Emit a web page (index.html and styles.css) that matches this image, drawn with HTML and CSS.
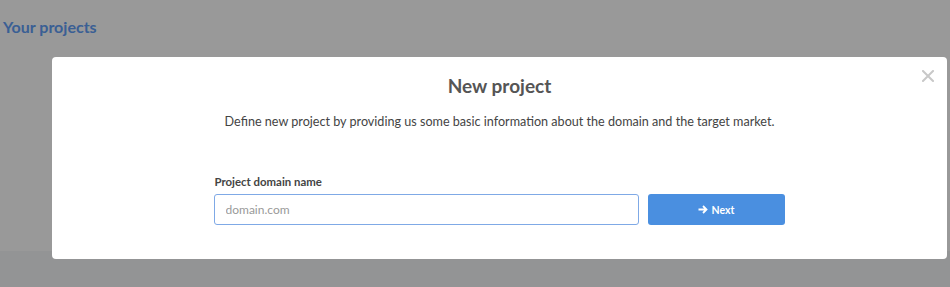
FILE: index.html
```html
<!DOCTYPE html>
<html>
<head>
<meta charset="utf-8">
<link rel="stylesheet" href="styles.css">
</head>
<body>
<div class="page">
  <div class="panel">
    <h1 class="page-title">Your projects</h1>
  </div>
</div>
<div class="overlay"></div>
<div class="modal">
  <button class="close" aria-label="Close">
    <svg width="12" height="12" viewBox="0 0 12 12"><path d="M1 1L11 11M11 1L1 11" stroke="#c8c8c8" stroke-width="2" stroke-linecap="square"/></svg>
  </button>
  <h2 class="modal-title">New project</h2>
  <p class="modal-text">Define new project by providing us some basic information about the domain and the target market.</p>
  <div class="form">
    <label class="label">Project domain name</label>
    <div class="row">
      <input class="input" type="text" placeholder="domain.com">
      <button class="next">
        <svg width="10" height="9" viewBox="0 0 10 9"><path d="M0.5 4.5H8.5M5 1L8.5 4.5L5 8" stroke="#fff" stroke-width="1.8" fill="none"/></svg>
        Next
      </button>
    </div>
  </div>
</div>
</body>
</html>
```

FILE: styles.css
```css
html, body {
  margin: 0;
  padding: 0;
}
body {
  width: 950px;
  height: 287px;
  overflow: hidden;
  background: #f6f7f9;
  font-family: Lato, "Noto Sans", sans-serif;
}
.page {
  height: 251px;
}
.panel {
  background: #fff;
  height: 251px;
  padding: 17px 3px 0;
  box-sizing: border-box;
}
.page-title {
  margin: 0;
  font-size: 16px;
  font-weight: 700;
  color: #629ef7;
  line-height: 20px;
}
.overlay {
  position: fixed;
  inset: 0;
  background: rgba(0, 0, 0, 0.4);
}
.modal {
  position: absolute;
  left: 52px;
  top: 57px;
  width: 895px;
  height: 202px;
  background: #fff;
  border-radius: 4px;
  box-sizing: border-box;
  padding-top: 17px;
  display: flex;
  flex-direction: column;
  align-items: center;
}
.close {
  position: absolute;
  right: 13px;
  top: 13px;
  border: 0;
  background: none;
  padding: 0;
  width: 12px;
  height: 12px;
  line-height: 0;
}
.modal-title {
  margin: 0;
  font-size: 19px;
  font-weight: 700;
  color: #555;
  line-height: 24px;
}
.modal-text {
  margin: 15px 0 0;
  font-size: 12.6px;
  color: #444;
  line-height: 18px;
}
.form {
  margin-top: 44px;
  width: 571px;
  margin-right: 1px;
  display: flex;
  flex-direction: column;
}
.label {
  font-size: 11.4px;
  font-weight: 700;
  color: #444;
  line-height: 13px;
  padding-left: 1px;
}
.row {
  margin-top: 6px;
  display: flex;
  gap: 9px;
}
.input {
  width: 425px;
  height: 31px;
  box-sizing: border-box;
  border: 1px solid #7fa9e6;
  border-radius: 3px;
  padding: 0 11px;
  font-family: inherit;
  font-size: 12px;
  color: #333;
  outline: none;
}
.input::placeholder {
  color: #999;
}
.next {
  width: 137px;
  height: 31px;
  border: 0;
  border-radius: 3px;
  background: #4a8fe0;
  color: #fff;
  font-family: inherit;
  font-size: 10.5px;
  font-weight: 700;
  display: flex;
  align-items: center;
  justify-content: center;
  gap: 4px;
}
```
